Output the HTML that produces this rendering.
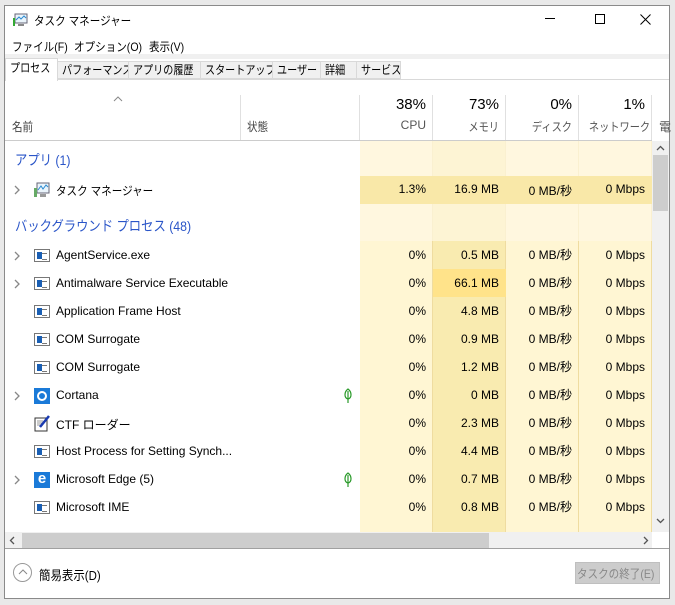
<!DOCTYPE html><html><head><meta charset="utf-8"><style>
*{margin:0;padding:0;box-sizing:border-box}
body{width:675px;height:605px;background:#e9e9e9;font-family:"Liberation Sans","Noto Sans CJK JP",sans-serif;font-size:12px;color:#000;position:relative;overflow:hidden}
.win{position:absolute;left:4px;top:5px;width:666px;height:594px;background:#fff;border:1px solid #8a8a8a}
.a{position:absolute;white-space:nowrap}
.s{transform:scaleX(.88);transform-origin:left center}
.sr{transform:scaleX(.85);transform-origin:right center}
.col{position:absolute;top:141px;height:391px;background:#fff6d3;border-right:1px solid #efdca0}
.r{text-align:right}
.tab{position:absolute;top:61px;height:18px;background:#f0f0f0;border:1px solid #d9d9d9;font-size:12px;line-height:15px;overflow:hidden}
.tab span{position:absolute;left:4px;top:1px;display:block;white-space:nowrap;transform:scaleX(.84);transform-origin:left center}
.ic{position:absolute;left:34px;width:16px;height:13px;border:1px solid #777;background:#fff}
.ic::after{content:"";position:absolute;left:2px;top:2px;width:5px;height:7px;background:#1a5fb4}
.ic::before{content:"";position:absolute;right:2px;top:3px;width:5px;height:5px;border-top:1px solid #777;border-bottom:1px solid #777}
.chev{position:absolute;left:13px}
</style></head><body><div class="win"></div>
<svg width="0" height="0" style="position:absolute"><defs><symbol id="ch" viewBox="0 0 8 10"><path d="M2 1L6 5L2 9" fill="none" stroke="#888" stroke-width="1.3"/></symbol></defs></svg>
<!-- title -->
<svg class="a" style="left:12px;top:12px" width="16" height="16"><rect x="3" y="2" width="12" height="9" fill="#eaf4fb" stroke="#667"/><polyline points="4,8 7,5 9,7 12,4 14,6" fill="none" stroke="#2a8ad0"/><rect x="1" y="6" width="2" height="8" fill="#3a3"/><rect x="6" y="12" width="6" height="2" fill="#888"/></svg>
<div class="a s" style="left:34px;top:12px;font-size:12px">タスク マネージャー</div>
<div class="a" style="left:545px;top:18px;width:10px;border-top:1px solid #000"></div>
<div class="a" style="left:595px;top:14px;width:10px;height:10px;border:1px solid #000"></div>
<svg class="a" style="left:640px;top:14px" width="11" height="11"><path d="M0.5 0.5L10.5 10.5M10.5 0.5L0.5 10.5" stroke="#000"/></svg>
<!-- menu -->
<div class="a s" style="left:12px;top:38px">ファイル(F)</div>
<div class="a s" style="left:74px;top:38px">オプション(O)</div>
<div class="a s" style="left:149px;top:38px">表示(V)</div>
<div class="a" style="left:5px;top:54px;width:664px;height:5px;background:#f0f0f0"></div>
<!-- tabs -->
<div class="tab" style="left:57px;width:72px"><span>パフォーマンス</span></div>
<div class="tab" style="left:128px;width:73px"><span>アプリの履歴</span></div>
<div class="tab" style="left:200px;width:73px"><span>スタートアップ</span></div>
<div class="tab" style="left:272px;width:49px"><span>ユーザー</span></div>
<div class="tab" style="left:320px;width:37px"><span>詳細</span></div>
<div class="tab" style="left:356px;width:45px"><span>サービス</span></div>
<div class="a" style="left:5px;top:79px;width:664px;border-top:1px solid #d9d9d9"></div>
<div class="tab" style="left:5px;top:58px;width:53px;height:23px;background:#fff;border-bottom:none;z-index:2"><span style="top:2px">プロセス</span></div>
<!-- header -->
<svg class="a" style="left:113px;top:96px" width="10" height="6"><path d="M1 5L5 1L9 5" fill="none" stroke="#888"/></svg>
<div class="a s" style="left:12px;top:118px;color:#444">名前</div>
<div class="a" style="left:240px;top:95px;height:45px;border-left:1px solid #e0e0e0"></div>
<div class="a s" style="left:247px;top:118px;color:#444">状態</div>
<div class="a" style="left:359px;top:95px;height:45px;border-left:1px solid #e0e0e0"></div>
<div class="a r" style="left:360px;top:96px;width:66px;font-size:15px">38%</div>
<div class="a r" style="left:360px;top:118px;width:66px;color:#555">CPU</div>
<div class="a" style="left:432px;top:95px;height:45px;border-left:1px solid #e0e0e0"></div>
<div class="a r" style="left:433px;top:96px;width:66px;font-size:15px">73%</div>
<div class="a r sr" style="left:433px;top:118px;width:66px;color:#555">メモリ</div>
<div class="a" style="left:505px;top:95px;height:45px;border-left:1px solid #e0e0e0"></div>
<div class="a r" style="left:506px;top:96px;width:66px;font-size:15px">0%</div>
<div class="a r sr" style="left:506px;top:118px;width:66px;color:#555">ディスク</div>
<div class="a" style="left:578px;top:95px;height:45px;border-left:1px solid #e0e0e0"></div>
<div class="a r" style="left:579px;top:96px;width:66px;font-size:15px">1%</div>
<div class="a r sr" style="left:579px;top:118px;width:66px;color:#555">ネットワーク</div>
<div class="a" style="left:651px;top:95px;height:45px;border-left:1px solid #e0e0e0"></div>
<div class="a" style="left:659px;top:118px;color:#555">電</div>
<div class="a" style="left:5px;top:140px;width:647px;border-top:1px solid #ccc"></div>
<!-- columns -->
<div class="col" style="left:360px;width:73px"></div>
<div class="col" style="left:433px;width:73px;background:#f9ebb0"></div>
<div class="col" style="left:506px;width:73px"></div>
<div class="col" style="left:579px;width:73px"></div>
<div class="a" style="left:360px;top:141px;width:292px;height:35px;background:#fff8e4;opacity:.7"></div>
<div class="a" style="left:360px;top:204px;width:292px;height:37px;background:#fff8e4;opacity:.7"></div>
<div class="a" style="left:360px;top:176px;width:292px;height:28px;background:#f9e8a8"></div>
<div class="a" style="left:433px;top:269px;width:73px;height:28px;background:#ffe38a"></div>
<!-- groups -->
<div class="a s" style="left:15px;top:150px;color:#2a55c8;font-size:14px">アプリ (1)</div>
<div class="a s" style="left:15px;top:216px;color:#2a55c8;font-size:14px">バックグラウンド プロセス (48)</div>
<svg class="chev" style="top:185px" width="8" height="10"><use href="#ch"/></svg>
<svg class="a" style="left:33px;top:182px" width="17" height="16"><rect x="4" y="1" width="12" height="10" fill="#eaf4fb" stroke="#667"/><polyline points="5,8 8,4 10,7 13,3 15,5" fill="none" stroke="#2a8ad0"/><rect x="1" y="6" width="3" height="9" fill="#6a6"/><rect x="7" y="12" width="6" height="3" fill="#999"/></svg>
<div class="a s" style="left:56px;top:182px">タスク マネージャー</div>
<div class="a r" style="left:360px;top:182px;width:66px">1.3%</div><div class="a r" style="left:433px;top:182px;width:66px">16.9 MB</div><div class="a r" style="left:506px;top:182px;width:66px">0 MB/秒</div><div class="a r" style="left:579px;top:182px;width:66px">0 Mbps</div>

<!-- rows -->
<svg class="chev" style="top:251px" width="8" height="10"><use href="#ch"/></svg><div class="ic" style="top:249px"></div><div class="a" style="left:56px;top:248px">AgentService.exe</div>
<svg class="chev" style="top:279px" width="8" height="10"><use href="#ch"/></svg><div class="ic" style="top:277px"></div><div class="a" style="left:56px;top:276px">Antimalware Service Executable</div>
<div class="ic" style="top:305px"></div><div class="a" style="left:56px;top:304px">Application Frame Host</div>
<div class="ic" style="top:333px"></div><div class="a" style="left:56px;top:332px">COM Surrogate</div>
<div class="ic" style="top:361px"></div><div class="a" style="left:56px;top:360px">COM Surrogate</div>
<svg class="chev" style="top:391px" width="8" height="10"><use href="#ch"/></svg><div class="a" style="left:34px;top:388px;width:16px;height:16px;background:#1a7ad8"><div style="position:absolute;left:3px;top:3px;width:10px;height:10px;border:2px solid #fff;border-radius:50%"></div></div><div class="a" style="left:56px;top:388px">Cortana</div>
<svg class="a" style="left:342px;top:388px" width="12" height="16"><path d="M6 1C2 4 2 10 6 11C10 10 10 4 6 1ZM6 3V15" fill="none" stroke="#2a9a2a" stroke-width="1.2"/></svg>
<svg class="a" style="left:34px;top:415px" width="16" height="17"><rect x="1" y="3" width="12" height="13" fill="#fff" stroke="#333"/><path d="M3 6h6M3 8h6M3 10h5" stroke="#999"/><path d="M15 1L6 12" stroke="#1a3ab0" stroke-width="2.5"/></svg><div class="a" style="left:56px;top:416px">CTF ローダー</div>
<div class="ic" style="top:445px"></div><div class="a" style="left:56px;top:444px">Host Process for Setting Synch...</div>
<svg class="chev" style="top:475px" width="8" height="10"><use href="#ch"/></svg><div class="a" style="left:34px;top:472px;width:16px;height:16px;background:#1a7ad8;color:#fff;font-weight:bold;font-size:15px;line-height:14px;text-align:center">e</div><div class="a" style="left:56px;top:472px">Microsoft Edge (5)</div>
<svg class="a" style="left:342px;top:472px" width="12" height="16"><path d="M6 1C2 4 2 10 6 11C10 10 10 4 6 1ZM6 3V15" fill="none" stroke="#2a9a2a" stroke-width="1.2"/></svg>
<div class="ic" style="top:501px"></div><div class="a" style="left:56px;top:500px">Microsoft IME</div>

<div class="a r" style="left:360px;top:248px;width:66px;line-height:14px">0%<br><br>0%<br><br>0%<br><br>0%<br><br>0%<br><br>0%<br><br>0%<br><br>0%<br><br>0%<br><br>0%</div>
<div class="a r" style="left:433px;top:248px;width:66px;line-height:14px">0.5 MB<br><br>66.1 MB<br><br>4.8 MB<br><br>0.9 MB<br><br>1.2 MB<br><br>0 MB<br><br>2.3 MB<br><br>4.4 MB<br><br>0.7 MB<br><br>0.8 MB</div>
<div class="a r" style="left:506px;top:248px;width:66px;line-height:14px">0 MB/秒<br><br>0 MB/秒<br><br>0 MB/秒<br><br>0 MB/秒<br><br>0 MB/秒<br><br>0 MB/秒<br><br>0 MB/秒<br><br>0 MB/秒<br><br>0 MB/秒<br><br>0 MB/秒</div>
<div class="a r" style="left:579px;top:248px;width:66px;line-height:14px">0 Mbps<br><br>0 Mbps<br><br>0 Mbps<br><br>0 Mbps<br><br>0 Mbps<br><br>0 Mbps<br><br>0 Mbps<br><br>0 Mbps<br><br>0 Mbps<br><br>0 Mbps</div>
<!-- v scrollbar -->
<div class="a" style="left:652px;top:141px;width:17px;height:391px;background:#f0f0f0"></div>
<svg class="a" style="left:656px;top:145px" width="9" height="6"><path d="M1 5L4.5 1.5L8 5" fill="none" stroke="#555" stroke-width="1.3"/></svg>
<div class="a" style="left:653px;top:155px;width:15px;height:56px;background:#cdcdcd"></div>
<svg class="a" style="left:656px;top:518px" width="9" height="6"><path d="M1 1L4.5 4.5L8 1" fill="none" stroke="#555" stroke-width="1.3"/></svg>
<!-- h scrollbar -->
<div class="a" style="left:5px;top:532px;width:647px;height:17px;background:#f0f0f0"></div>
<svg class="a" style="left:9px;top:536px" width="6" height="9"><path d="M5 1L1.5 4.5L5 8" fill="none" stroke="#555" stroke-width="1.3"/></svg>
<div class="a" style="left:22px;top:533px;width:467px;height:15px;background:#cdcdcd"></div>
<svg class="a" style="left:495px;top:536px;display:none" width="6" height="9"></svg>
<svg class="a" style="left:495px;top:536px" width="6" height="9" transform="translate(148,0)"><path d="M1 1L4.5 4.5L1 8" fill="none" stroke="#555" stroke-width="1.3"/></svg>
<div class="a" style="left:5px;top:548px;width:664px;border-top:1px solid #a0a0a0"></div>
<!-- footer -->
<div class="a" style="left:13px;top:563px;width:19px;height:19px;border:1px solid #999;border-radius:50%"></div>
<svg class="a" style="left:18px;top:569px" width="10" height="6"><path d="M1 5L5 1L9 5" fill="none" stroke="#888"/></svg>
<div class="a s" style="left:39px;top:565px;font-size:13px">簡易表示(D)</div>
<div class="a" style="left:575px;top:562px;width:85px;height:22px;background:#ccc;border:1px solid #bfbfbf"></div>
<div class="a s" style="left:577px;top:565px;color:#888;font-size:12px">タスクの終了(E)</div>
</body></html>
